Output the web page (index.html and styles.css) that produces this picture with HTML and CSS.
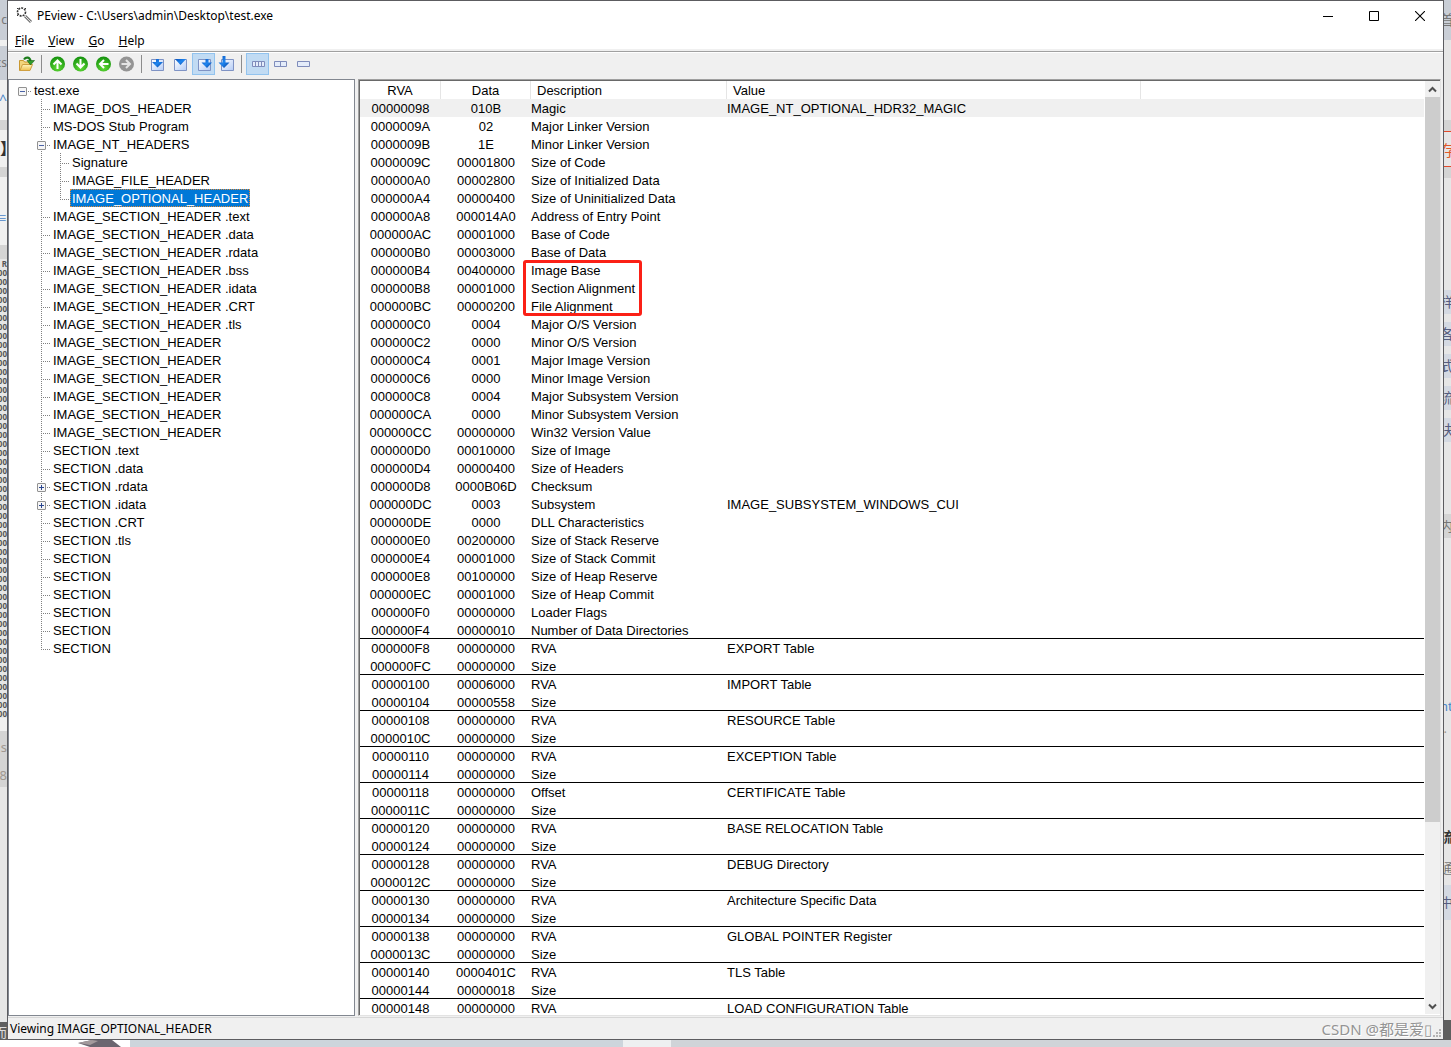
FILE: index.html
```html
<!DOCTYPE html>
<html lang="en">
<head>
<meta charset="utf-8">
<title>PEview - C:\Users\admin\Desktop\test.exe</title>
<link rel="stylesheet" href="styles.css">
</head>
<body>
<svg class="defs" width="0" height="0" aria-hidden="true">
  <defs>
    <radialGradient id="green" cx="50%" cy="75%" r="70%"><stop offset="0" stop-color="#62dc35"/><stop offset="1" stop-color="#189410"/></radialGradient>
    <linearGradient id="pane" x1="0" y1="0" x2="1" y2="1"><stop offset="0" stop-color="#ffffff"/><stop offset="1" stop-color="#b4ccf6"/></linearGradient>
    <linearGradient id="arrow" x1="0" y1="0" x2="1" y2="1"><stop offset="0" stop-color="#0a50b8"/><stop offset=".5" stop-color="#1f86f0"/><stop offset="1" stop-color="#063f9c"/></linearGradient>
    <linearGradient id="folder" x1="0" y1="0" x2="0" y2="1"><stop offset="0" stop-color="#fff6c0"/><stop offset="1" stop-color="#f0c050"/></linearGradient>
  </defs>
</svg>
<div class="desktop">
  <div class="behind behind-left" aria-hidden="true" id="left"></div>
  <main class="window">
    <header class="titlebar">
      <svg class="app-icon" width="18" height="18" viewBox="0 0 18 18" fill="none"><circle cx="5.500" cy="5" r="4" stroke="#333" stroke-width="1.6" stroke-dasharray="2 1"/><path d="M1 1l1 1M10 1L9 2M1 9l1-1" stroke="#333"/><path d="M9 9l6 6" stroke="#777" stroke-width="3"/><path d="M9 9l6 6" stroke="#ddd"/></svg>
      <h1 class="title">PEview - C:\Users\admin\Desktop\test.exe</h1>
      <div class="caption">
        <button aria-label="Minimize"><svg width="10" height="10"><path d="M0 5.5h10" stroke="#000"/></svg></button>
        <button aria-label="Maximize"><svg width="10" height="10"><path d="M.5.5h9v9h-9z" fill="none" stroke="#000"/></svg></button>
        <button aria-label="Close"><svg width="10" height="10"><path d="M0 0l10 10M10 0L0 10" stroke="#000" stroke-width="1.1"/></svg></button>
      </div>
    </header>
    <nav class="menu">
      <button><u>F</u>ile</button><button><u>V</u>iew</button><button><u>G</u>o</button><button><u>H</u>elp</button>
    </nav>
    <div class="toolbar" role="toolbar">
      <button aria-label="Open"><svg viewBox="0 0 17 16"><path d="M1.500 4.500h4l1 1.500h5v8.500h-10z" fill="#f3d57c" stroke="#c9982f"/><path d="M2 14.500L4.500 8.500h10L12 14.500z" fill="url(#folder)" stroke="#d0a040"/><path d="M6 3.500C8 .5 12 1 12.500 5" fill="none" stroke="#1d7d1d" stroke-width="2.200"/><path d="M9 4.500h7.500L12.500 9z" fill="#2f9c2a" stroke="#176217" stroke-width=".6"/></svg></button>
      <span class="sep"></span>
      <button aria-label="Up"><svg viewBox="0 0 17 16"><circle cx="8.500" cy="8" r="7.500" fill="url(#green)"/><path d="M8.500 13V5M4.500 8.500l4-4 4 4" fill="none" stroke="#fff" stroke-width="2"/></svg></button>
      <button aria-label="Down"><svg viewBox="0 0 17 16"><circle cx="8.500" cy="8" r="7.500" fill="url(#green)"/><path d="M8.500 3v8M4.500 7.500l4 4 4-4" fill="none" stroke="#fff" stroke-width="2"/></svg></button>
      <button aria-label="Back"><svg viewBox="0 0 17 16"><circle cx="8.500" cy="8" r="7.500" fill="url(#green)"/><path d="M13.500 8h-8M9 4L5 8l4 4" fill="none" stroke="#fff" stroke-width="2"/></svg></button>
      <button aria-label="Forward"><svg viewBox="0 0 17 16"><circle cx="8.500" cy="8" r="7.500" fill="#949494"/><path d="M3.500 8h8M8 4l4 4-4 4" fill="none" stroke="#e4e4e4" stroke-width="2"/></svg></button>
      <span class="sep"></span>
      <button aria-label="View down"><svg viewBox="0 0 17 16"><path d="M2.500 3.500h12v11h-12z" fill="url(#pane)" stroke="#7f93c4"/><path d="M7 3h3v3h4l-5.500 5.500L3 6h4z" fill="url(#arrow)"/></svg></button>
      <button aria-label="View whole"><svg viewBox="0 0 17 16"><path d="M2.500 3.500h12v11h-12z" fill="url(#pane)" stroke="#7f93c4"/><path d="M3 3h11L8.500 9z" fill="url(#arrow)"/></svg></button>
      <button class="on" aria-label="View next"><svg viewBox="0 0 17 16"><path d="M3.500 3.500h12v11h-12z" fill="url(#pane)" stroke="#7f93c4"/><path d="M10.500 3h3v3.500H17L12 12 6.500 6.500h4z" fill="url(#arrow)"/></svg></button>
      <button aria-label="View previous"><svg viewBox="0 0 17 16"><path d="M3.500 3.500h12v11h-12z" fill="url(#pane)" stroke="#7f93c4"/><path d="M4.500 0h3v6.500h4L6 12 .5 6.500h4z" fill="url(#arrow)"/></svg></button>
      <span class="sep"></span>
      <button class="on" aria-label="Bytes"><svg viewBox="0 0 17 16"><path d="M3.500 5.500h12v5h-12z" fill="#e4ecfa" stroke="#7f8cbb"/><path d="M6.500 6v5M9.500 6v5M12.500 6v5" stroke="#7f8cbb"/></svg></button>
      <button aria-label="Words"><svg viewBox="0 0 17 16"><path d="M2.500 5.500h12v5h-12z" fill="#e4ecfa" stroke="#7f8cbb"/><path d="M8.500 6v5" stroke="#7f8cbb"/></svg></button>
      <button aria-label="Double words"><svg viewBox="0 0 17 16"><path d="M2.500 5.500h12v5h-12z" fill="#e4ecfa" stroke="#7f8cbb"/></svg></button>
    </div>
    <div class="panes">
      <section class="tree" aria-label="Structure"><ul class="root" id="tree"></ul></section>
      <section class="list">
        <div class="list-view">
          <table>
            <colgroup><col class="c-rva"><col class="c-data"><col class="c-desc"><col class="c-value"><col></colgroup>
            <thead><tr><th>RVA</th><th>Data</th><th>Description</th><th>Value</th><th></th></tr></thead>
            <tbody id="rows"></tbody>
          </table>
        </div>
        <div class="scrollbar" aria-hidden="true">
          <svg width="15" height="16" viewBox="0 0 15 16"><path d="M4 10.500L7.500 7l3.500 3.500" fill="none" stroke="#505050" stroke-width="2"/></svg>
          <div class="track"><div class="thumb"></div></div>
          <svg width="15" height="16" viewBox="0 0 15 16"><path d="M4 6.500L7.500 10 11 6.500" fill="none" stroke="#505050" stroke-width="2"/></svg>
        </div>
      </section>
    </div>
    <footer class="status">
      <span>Viewing IMAGE_OPTIONAL_HEADER</span>
      <span class="mark">CSDN @都是爱▯</span>
      <svg class="grip" width="10" height="10" viewBox="0 0 10 10" fill="#b4b4b4"><path d="M7 0h2v2H7zM4 3h2v2H4zM7 3h2v2H7zM1 6h2v2H1zM4 6h2v2H4zM7 6h2v2H7z"/></svg>
    </footer>
  </main>
  <div class="behind behind-right" aria-hidden="true" id="right"></div>
  <div class="below" aria-hidden="true"><svg width="50" height="7" viewBox="0 0 50 7"><path d="M0 3L14 0h20l9 7H12z" fill="#6b6670"/><path d="M0 3l14-3 6 1-8 4z" fill="#a39a9c"/></svg></div>
</div>
<script src="script.js"></script>
</body>
</html>
```
FILE: styles.css
```css
* { box-sizing: border-box; }
body {
  margin: 0;
  font: 13px/18px "Liberation Sans", Arial, sans-serif;
  color: #000;
}
button {
  border: 0;
  padding: 0;
  background: none;
  color: inherit;
  font: inherit;
}
svg { display: block; flex: none; }
.defs { position: absolute; }
.desktop {
  display: grid;
  grid-template: minmax(0, 1fr) 7px / 7px minmax(0, 1fr) 7px;
  height: 100vh;
  overflow: hidden;
}
.window {
  display: flex;
  flex-direction: column;
  min-width: 0;
  border: 1px solid #5c5c60;
  background: #f0f0f0;
}

/* caption and menu */
.titlebar {
  display: flex;
  align-items: center;
  flex: none;
  height: 29px;
  padding-left: 8px;
  background: #fff;
}
.title {
  flex: 1;
  margin: 0;
  padding-left: 3px;
  font: 12px/18px "Noto Sans", sans-serif;
}
.caption { display: flex; }
.caption button {
  display: flex;
  align-items: center;
  justify-content: center;
  width: 46px;
  height: 28px;
}
.menu {
  display: flex;
  flex: none;
  gap: 14px;
  height: 22px;
  padding: 2px 7px 0;
  border-bottom: 1px solid #a0a0a0;
  background: linear-gradient(#fff 19px, #f0f0f0 19px);
  font: 12px/18px "Noto Sans", sans-serif;
}
.menu button { height: 18px; }

.toolbar {
  display: flex;
  flex: none;
  height: 27px;
  padding: 0 7px;
  border-top: 1px solid #fff;
}
.toolbar button {
  display: grid;
  place-items: center;
  width: 23px;
  height: 22px;
  border: 1px solid transparent;
}
.toolbar button.on {
  border-color: #92c3ee;
  background: #c1dbf3;
}
.toolbar svg { width: 17px; height: 16px; }
.sep {
  width: 8px;
  margin: 2px 0;
  height: 18px;
  background: linear-gradient(#8c8c8c, #8c8c8c) 3px 0 / 1px 100% no-repeat;
}

/* panes */
.panes {
  display: flex;
  flex: 1;
  gap: 3px;
  min-height: 0;
}
.tree {
  flex: none;
  width: 347px;
  overflow: hidden;
  padding: 1px 0 0 4px;
  border: 1px solid #828790;
  background: #fff;
}
.tree ul {
  margin: 0;
  padding: 0 0 0 19px;
  list-style: none;
}
.tree ul.root { padding: 0; }
.tree li {
  background:
    repeating-linear-gradient(#808080 0 1px, transparent 1px 2px) 9px 0 / 1px 100% no-repeat,
    repeating-linear-gradient(90deg, #808080 0 1px, transparent 1px 2px) 9px 10px / 9px 1px no-repeat;
}
.tree li:last-child { background-size: 1px 10px, 9px 1px; }
.tree .root > li { background-size: 0 0, 9px 1px; }
.node {
  display: flex;
  align-items: center;
  height: 18px;
  padding-left: 19px;
}
.node span {
  height: 18px;
  padding: 1px 2px 0;
  line-height: 17px;
  white-space: pre;
}
.node.has-box { padding-left: 5px; gap: 5px; }
.node.selected span {
  background: #0078d7;
  color: #fff;
  outline: 1px dotted #e08a38;
  outline-offset: -1px;
}
.box {
  width: 9px;
  height: 9px;
  margin-top: 3px;
  border: 1px solid #919191;
  border-radius: 1px;
  background: linear-gradient(#4b63a7, #4b63a7) 1px 3px / 5px 1px no-repeat, #f6f6f6;
}
.box.closed {
  background:
    linear-gradient(#2a4690, #2a4690) 1px 3px / 5px 1px no-repeat,
    linear-gradient(#2a4690, #2a4690) 3px 1px / 1px 5px no-repeat, #f6f6f6;
}
.list {
  display: flex;
  flex: 1;
  min-width: 0;
  margin-right: 2px;
  border: 1px solid #e3e3e3;
  border-top-color: #a0a0a0;
  border-left-color: #a0a0a0;
  background: #fff;
  box-shadow: inset 1px 1px #696969;
  padding: 1px 0 1px 1px;
}
.list-view { flex: 1; overflow: hidden; }
table {
  width: 100%;
  table-layout: fixed;
  border-collapse: separate;
  border-spacing: 0;
}
.c-rva { width: 81px; }
.c-data { width: 90px; }
.c-desc { width: 196px; }
.c-value { width: 414px; }
th, td {
  height: 18px;
  padding: 1px 0 0;
  line-height: 17px;
  font-weight: 400;
  text-align: left;
  white-space: nowrap;
}
th { padding-left: 6px; border-right: 1px solid #e5e5e5; }
th:last-child { border: 0; }
th:nth-child(-n+2), td:nth-child(-n+2) { padding: 1px 0 0; text-align: center; }
tr.current td { background: #f0f0f0; }
tr.rule td { background: linear-gradient(#000, #000) 0 100% / 100% 1px no-repeat; }
.framed { position: relative; }
.frame {
  position: absolute;
  top: -1px;
  left: -8px;
  width: 119px;
  height: 56px;
  border: 3px solid #fb2016;
  border-radius: 3px;
}
.scrollbar {
  display: flex;
  flex-direction: column;
  flex: none;
  width: 15px;
  margin-left: 1px;
  background: #f0f0f0;
}
.track { flex: 1; }
.thumb { height: 80.5%; background: #cdcdcd; }

.status {
  display: flex;
  align-items: center;
  flex: none;
  height: 22px;
  margin-top: 1px;
  padding: 0 1px 0 2px;
  border-top: 1px solid #d7d7d7;
  font: 12px/18px "Noto Sans", sans-serif;
}
.mark {
  margin-left: auto;
  color: #949494;
  font: 15px/18px "Noto Sans", "Noto Sans CJK SC", sans-serif;
  text-shadow: 1px 1px #fff;
  white-space: nowrap;
}
.grip { align-self: flex-end; }

/* slivers of the windows underneath */
.behind { overflow: hidden; background: #e6e6e6; color: #777; }
.behind div {
  display: flex;
  overflow: hidden;
  white-space: nowrap;
  font-family: "Noto Sans", "Noto Sans CJK SC", sans-serif;
}
.behind-left div { justify-content: flex-end; }
.behind-left .strong { justify-content: flex-start; }
.behind-right div { text-indent: -4px; }
.below {
  grid-column: 1 / -1;
  padding-left: 78px;
  background: linear-gradient(90deg, #fff 130px, #cdd5dc 130px 623px, #eef0f1 623px 671px, #d0d4d8 671px);
}
.behind .cool { background: #c9ced6; }
.behind .pale { background: #f0f0f0; }
.behind .gray { background: #d4d4d4; }
.behind .dark { background: #5f5f5f; color: #ddd; }
.behind .tint { background: #d4d9e2; color: #565d80; }
.behind .alert { border: solid #e2492a; border-width: 1px 0; color: #e2592a; }
.behind .hex { color: #555; font-weight: 700; }
.behind .blue { color: #4a86c8; }
.behind .muted { color: #a09890; }
.behind .strong { color: #333; font-weight: 700; }
```
FILE: script.js
```js
const H = 'IMAGE_SECTION_HEADER';
const tree = [{ t: 'test.exe', open: true, kids: [
  'IMAGE_DOS_HEADER', 'MS-DOS Stub Program',
  { t: 'IMAGE_NT_HEADERS', open: true, kids: ['Signature', 'IMAGE_FILE_HEADER', { t: 'IMAGE_OPTIONAL_HEADER', selected: true }] },
  ...['.text', '.data', '.rdata', '.bss', '.idata', '.CRT', '.tls'].map(s => H + ' ' + s),
  H, H, H, H, H, H,
  'SECTION .text', 'SECTION .data', { t: 'SECTION .rdata', closed: true }, { t: 'SECTION .idata', closed: true },
  'SECTION .CRT', 'SECTION .tls', 'SECTION', 'SECTION', 'SECTION', 'SECTION', 'SECTION', 'SECTION'
] }];
const node = n => {
  if (typeof n === 'string') n = { t: n };
  const box = n.open || n.closed;
  return `<li><div class="node${box ? ' has-box' : ''}${n.selected ? ' selected' : ''}">` +
    (box ? `<i class="box${n.closed ? ' closed' : ''}"></i>` : '') + `<span>${n.t}</span></div>` +
    (n.kids ? `<ul>${n.kids.map(node).join('')}</ul>` : '') + '</li>';
};
document.getElementById('tree').innerHTML = tree.map(node).join('');

const fields = `98|010B|Magic|IMAGE_NT_OPTIONAL_HDR32_MAGIC
9A|02|Major Linker Version
9B|1E|Minor Linker Version
9C|00001800|Size of Code
A0|00002800|Size of Initialized Data
A4|00000400|Size of Uninitialized Data
A8|000014A0|Address of Entry Point
AC|00001000|Base of Code
B0|00003000|Base of Data
B4|00400000|Image Base
B8|00001000|Section Alignment
BC|00000200|File Alignment
C0|0004|Major O/S Version
C2|0000|Minor O/S Version
C4|0001|Major Image Version
C6|0000|Minor Image Version
C8|0004|Major Subsystem Version
CA|0000|Minor Subsystem Version
CC|00000000|Win32 Version Value
D0|00010000|Size of Image
D4|00000400|Size of Headers
D8|0000B06D|Checksum
DC|0003|Subsystem|IMAGE_SUBSYSTEM_WINDOWS_CUI
DE|0000|DLL Characteristics
E0|00200000|Size of Stack Reserve
E4|00001000|Size of Stack Commit
E8|00100000|Size of Heap Reserve
EC|00001000|Size of Heap Commit
F0|00000000|Loader Flags
F4|00000010|Number of Data Directories
F8|00000000|RVA|EXPORT Table
FC|00000000|Size
100|00006000|RVA|IMPORT Table
104|00000558|Size
108|00000000|RVA|RESOURCE Table
10C|00000000|Size
110|00000000|RVA|EXCEPTION Table
114|00000000|Size
118|00000000|Offset|CERTIFICATE Table
11C|00000000|Size
120|00000000|RVA|BASE RELOCATION Table
124|00000000|Size
128|00000000|RVA|DEBUG Directory
12C|00000000|Size
130|00000000|RVA|Architecture Specific Data
134|00000000|Size
138|00000000|RVA|GLOBAL POINTER Register
13C|00000000|Size
140|0000401C|RVA|TLS Table
144|00000018|Size
148|00000000|RVA|LOAD CONFIGURATION Table`.split('\n').map(l => l.split('|'));
document.getElementById('rows').innerHTML = fields.map(([rva, data, desc, value = ''], i) => {
  const cls = i === 0 ? ' class="current"' : desc === 'Size' || rva === 'F4' ? ' class="rule"' : '';
  const framed = desc === 'Image Base';
  return `<tr${cls}><td>${rva.padStart(8, '0')}</td><td>${data}</td>` +
    `<td${framed ? ' class="framed"' : ''}>${desc}${framed ? '<span class="frame"></span>' : ''}</td><td>${value}</td><td></td></tr>`;
}).join('');

// [height, class, text, font size]
const strip = (id, parts) => {
  document.getElementById(id).innerHTML = parts.map(([h, c, t = '', f = 14]) =>
    `<div class="${c}" style="height:${h}px;line-height:${h}px;font-size:${f}px">${t}</div>`).join('');
};
const hex = Array.from({ length: 50 }, () => [9, 'hex', '00', 8]);
strip('left', [
  [40, 'cool', 'c', 12], [6, 'pale'], [34, 'cool', 'cs', 12], [40, 'pale blue', '^', 14], [10, 'gray'], [37, 'pale strong', '】', 16],
  [10, 'gray'], [28, 'pale'], [26, 'pale blue', '≡', 10], [14, 'pale'], [14, 'gray'], [9, 'hex', 'R', 8],
  ...hex, [13, 'pale'], [32, 'gray muted', 's', 13], [24, 'gray muted', '8', 13], [235, ''], [20, 'dark', '而', 13]
]);
strip('right', [
  [40, 'cool', '首', 14], [80, ''], [11, 'gray'], [36, 'alert', '存', 15], [11, 'gray'], [112, ''],
  [24, 'tint', '样', 14], [8, ''], [24, 'tint', '各', 14], [8, ''], [24, 'tint', '式', 14], [8, ''],
  [24, 'tint', '流', 14], [8, ''], [24, 'tint', '决', 14], [72, ''], [24, 'gray', '内', 13],
  [156, ''], [24, 'blue', 'nt', 13], [20, 'muted', '..', 13], [85, ''], [28, 'strong', '流', 14],
  [34, '', '通', 13], [35, 'tint', '中', 13], [100, ''], [20, 'dark']
]);
```
